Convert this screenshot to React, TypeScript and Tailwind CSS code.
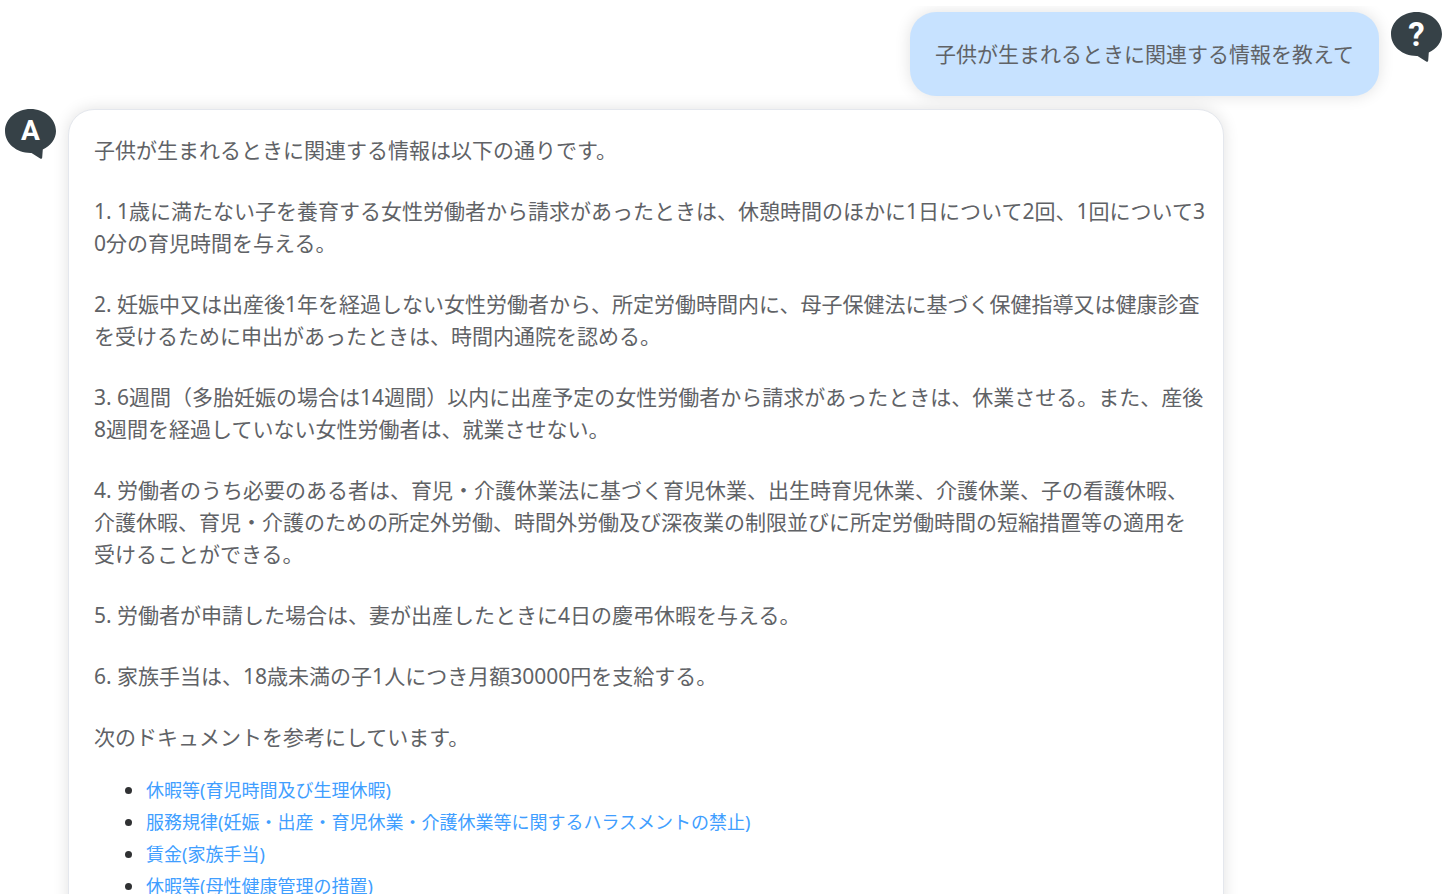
import React from 'react';

interface Source {
  title: string;
  href: string;
}

interface AvatarProps {
  label: string;
  letter: string;
  fontSize: number;
  baseline: number;
}

const QUESTION = '子供が生まれるときに関連する情報を教えて';

const ANSWER: string[] = [
  '子供が生まれるときに関連する情報は以下の通りです。',
  '1. 1歳に満たない子を養育する女性労働者から請求があったときは、休憩時間のほかに1日について2回、1回について30分の育児時間を与える。',
  '2. 妊娠中又は出産後1年を経過しない女性労働者から、所定労働時間内に、母子保健法に基づく保健指導又は健康診査を受けるために申出があったときは、時間内通院を認める。',
  '3. 6週間（多胎妊娠の場合は14週間）以内に出産予定の女性労働者から請求があったときは、休業させる。また、産後8週間を経過していない女性労働者は、就業させない。',
  '4. 労働者のうち必要のある者は、育児・介護休業法に基づく育児休業、出生時育児休業、介護休業、子の看護休暇、介護休暇、育児・介護のための所定外労働、時間外労働及び深夜業の制限並びに所定労働時間の短縮措置等の適用を受けることができる。',
  '5. 労働者が申請した場合は、妻が出産したときに4日の慶弔休暇を与える。',
  '6. 家族手当は、18歳未満の子1人につき月額30000円を支給する。',
  '次のドキュメントを参考にしています。',
];

const SOURCES: Source[] = [
  { title: '休暇等(育児時間及び生理休暇)', href: '#childcare-time' },
  { title: '服務規律(妊娠・出産・育児休業・介護休業等に関するハラスメントの禁止)', href: '#harassment' },
  { title: '賃金(家族手当)', href: '#family-allowance' },
  { title: '休暇等(母性健康管理の措置)', href: '#maternal-health' },
];

// Speech balloon with a single letter inside
const Avatar: React.FC<AvatarProps> = ({ label, letter, fontSize, baseline }) => (
  <svg viewBox="0 0 51 50" className="w-[51px] h-[50px] shrink-0" role="img" aria-label={label}>
    <path
      d="M25.500 0C39.600 0 51 9.800 51 22C51 30.200 45.500 36.800 37.800 40.600L37.200 48.500C37.100 49.800 36 50.100 35.200 49.500L26.500 43.900C11.400 44.300 0 34.200 0 22C0 9.800 11.400 0 25.500 0Z"
      fill="#364147"
    />
    <text
      x="25.500"
      y={baseline}
      fontSize={fontSize}
      textAnchor="middle"
      fill="#ffffff"
      className="font-[Roboto,sans-serif] font-bold"
    >
      {letter}
    </text>
  </svg>
);

const App: React.FC = () => {
  return (
    <main className="h-screen overflow-hidden bg-white pt-1.5 font-['Noto_Sans','Noto_Sans_CJK_JP',sans-serif] text-[21px] leading-8 text-[#606266]">
      <div className="flex flex-col gap-[13px] overflow-hidden pt-1.5 pb-5" lang="ja">
        {/* Question */}
        <div className="flex items-start justify-end gap-3 pl-[68px] pr-3">
          <div className="rounded-[26px] bg-[#c7e2ff] px-[25px] py-[26px] shadow-[0_0_16px_rgba(0,0,0,0.12)]">
            <p>{QUESTION}</p>
          </div>
          <Avatar label="質問" letter="?" fontSize={33} baseline={34} />
        </div>

        {/* Answer */}
        <div className="flex items-start gap-3 pl-[5px] pr-[230px]">
          <Avatar label="回答" letter="A" fontSize={28} baseline={31} />
          <div className="relative flex-1 rounded-[26px] border border-[#e4e7ed] bg-white py-6 pl-[25px] pr-[18px] shadow-[0_0_16px_rgba(0,0,0,0.12)]">
            <div className="flex flex-col gap-[29px] break-all">
              {ANSWER.map((text) => (
                <p key={text}>{text}</p>
              ))}
            </div>
            <ul className="mt-5 list-disc pl-[52px] text-[#303133]">
              {SOURCES.map((source) => (
                <li key={source.href}>
                  <a href={source.href} className="text-lg leading-none text-[#409eff]">
                    {source.title}
                  </a>
                </li>
              ))}
            </ul>
          </div>
        </div>
      </div>
    </main>
  );
};

export default App;
